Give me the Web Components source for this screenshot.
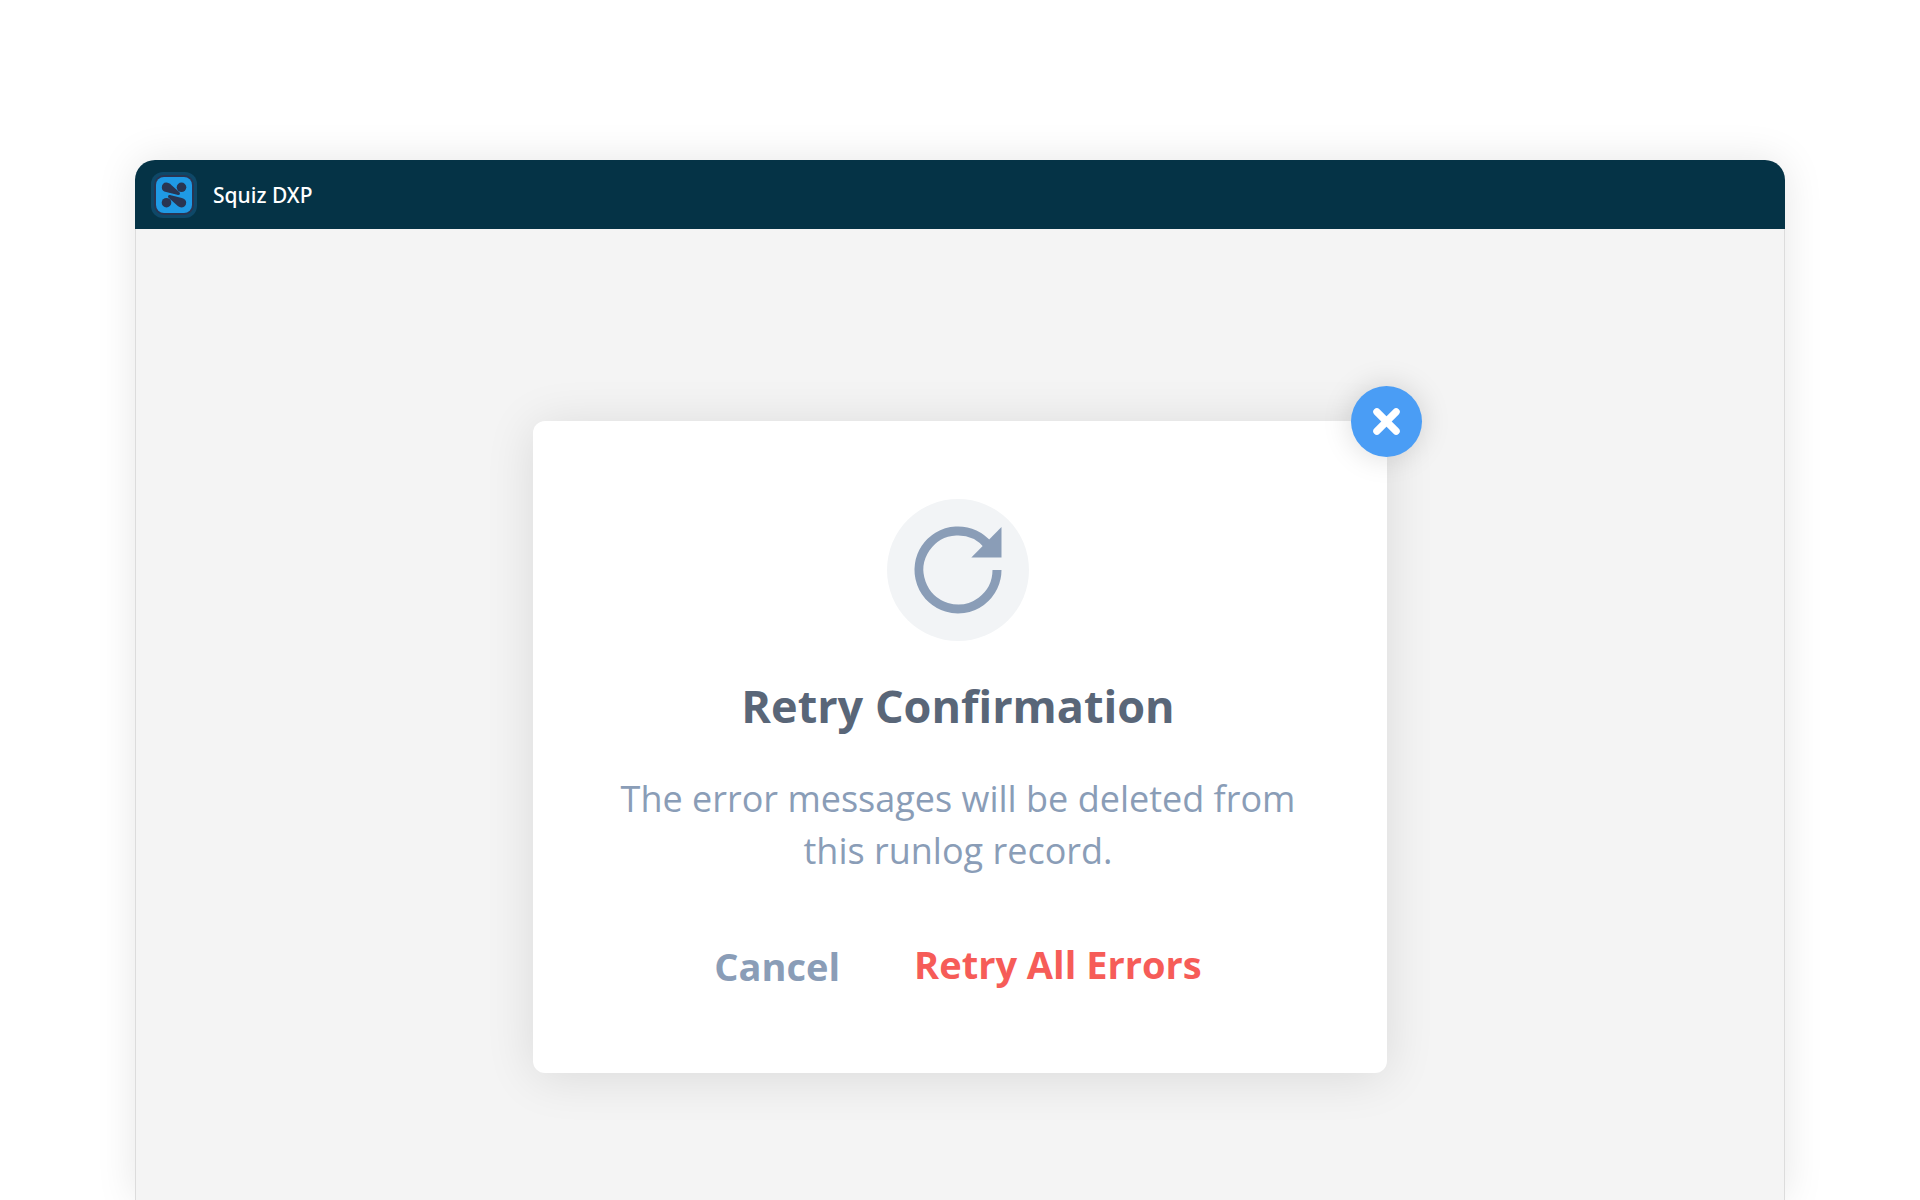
<!DOCTYPE html>
<html lang="en">
<head>
<meta charset="utf-8">
<title>Squiz DXP</title>
<style>
html, body { height: 100%; }
body { margin: 0; background: #fff; font-family: "Open Sans", "Noto Sans", sans-serif; overflow: hidden; }
</style>
</head>
<body>
<app-window>
  <app-header slot="header">Squiz DXP</app-header>
  <confirm-dialog>
    <retry-icon slot="icon"></retry-icon>
    <span slot="title">Retry Confirmation</span>
    <span slot="message">The error messages will be deleted from this runlog record.</span>
    <dialog-action slot="actions">Cancel</dialog-action>
    <dialog-action slot="actions" tone="danger">Retry All Errors</dialog-action>
  </confirm-dialog>
</app-window>
<script>
function define(name, html) {
  const template = document.createElement('template');
  template.innerHTML = html;
  customElements.define(name, class extends HTMLElement {
    constructor() {
      super();
      this.attachShadow({ mode: 'open' }).append(template.content.cloneNode(true));
    }
  });
}

define('app-window', `
<style>
  :host { display: flex; box-sizing: border-box; height: 100%; padding: 160px 135px 0; }
  .frame { flex: 1; display: flex; flex-direction: column; border-radius: 20px 20px 0 0; box-shadow: 0 0 40px rgba(0,0,0,.1); }
  main { flex: 1; display: flex; justify-content: center; align-items: flex-start; box-sizing: border-box; padding-top: 192px; background: #f4f4f4; border: solid #dcdcdc; border-width: 0 1px; }
</style>
<div class="frame"><slot name="header"></slot><main><slot></slot></main></div>`);

define('app-header', `
<style>
  :host { display: block; }
  header { display: flex; align-items: center; gap: 16px; height: 69px; padding: 0 16px; background: #053346; color: #fff; border-radius: 20px 20px 0 0; font-family: "Noto Sans", "Open Sans", sans-serif; font-size: 21px; line-height: 28px; font-weight: 500; }
  svg { display: block; width: 46px; height: 46px; }
</style>
<header>
  <svg viewBox="0 0 46 46" aria-hidden="true">
    <rect width="46" height="46" rx="12" fill="#0e4868"/>
    <rect x="3" y="3" width="40" height="40" rx="10" fill="#293552"/>
    <rect x="5" y="5" width="36" height="36" rx="8" fill="#1f9ae5"/>
    <g fill="#293552">
      <path d="M15.200 10.600c2 0 3.600.9 5.100 2.300l7.600 6.800c.9.800 1.200 1.500 1 2.400-.3 1-1.300 1.100-2.800.7l-11-2.700c-2.700-.7-4.300-2.200-4.300-4.700 0-2.700 1.800-4.800 4.400-4.800z"/>
      <circle cx="30.500" cy="15.300" r="4.800"/>
      <circle cx="15.500" cy="30.700" r="4.800"/>
      <path d="M30.800 35.400c-2 0-3.600-.9-5.100-2.300l-7.600-6.800c-.9-.8-1.200-1.500-1-2.400.3-1 1.300-1.100 2.800-.7l11 2.700c2.700.7 4.300 2.200 4.300 4.700 0 2.700-1.800 4.800-4.400 4.800z"/>
    </g>
  </svg>
  <span><slot></slot></span>
</header>`);

define('retry-icon', `
<style>
  :host { display: block; width: 142px; height: 142px; }
  svg { display: block; width: 100%; height: 100%; }
</style>
<svg viewBox="0 0 142 142" aria-hidden="true">
  <circle cx="71" cy="71" r="71" fill="#f2f4f6"/>
  <path d="M110 71A39 39 0 1 1 101 46" fill="none" stroke="#8a9db7" stroke-width="9"/>
  <path d="M114.500 28v30.500H84.300z" fill="#8a9db7"/>
</svg>`);

define('close-button', `
<style>
  :host { display: block; }
  button { display: flex; align-items: center; justify-content: center; width: 71px; height: 71px; padding: 0; border: 0; border-radius: 50%; background: #4a9df5; box-shadow: 0 0 30px rgba(0,0,0,.15); cursor: pointer; }
</style>
<button type="button" aria-label="Close">
  <svg width="27" height="27" viewBox="0 0 28 28" aria-hidden="true"><path d="M4 4l20 20M24 4L4 24" stroke="#fff" stroke-width="7.500" stroke-linecap="round"/></svg>
</button>`);

define('dialog-action', `
<style>
  :host { display: block; color: #8a9db7; padding-top: 2px; }
  :host([tone="danger"]) { color: #f65c58; padding-top: 0; }
  button { display: block; padding: 0; border: 0; background: none; color: inherit; font: 700 38px/52px "Open Sans", "Noto Sans", sans-serif; cursor: pointer; }
</style>
<button type="button"><slot></slot></button>`);

define('confirm-dialog', `
<style>
  :host { display: block; width: 854px; max-width: 100%; }
  section { position: relative; display: flex; flex-direction: column; align-items: center; box-sizing: border-box; padding: 78px 82px 81px 78px; background: #fff; border-radius: 12px; box-shadow: 0 4px 50px rgba(0,0,0,.11); text-align: center; }
  close-button { position: absolute; top: -35px; right: -35px; }
  h1 { margin: 35px 0 0; color: #596678; font-size: 45px; line-height: 60px; font-weight: 700; }
  p { margin: 37px 0 0; color: #8a9db7; font-size: 36px; line-height: 52px; }
  .actions { display: flex; justify-content: center; align-items: flex-start; gap: 74px; margin-top: 61px; }
</style>
<section role="dialog" aria-labelledby="title" aria-describedby="message">
  <close-button></close-button>
  <slot name="icon"></slot>
  <h1 id="title"><slot name="title"></slot></h1>
  <p id="message"><slot name="message"></slot></p>
  <div class="actions"><slot name="actions"></slot></div>
</section>`);
</script>
</body>
</html>
